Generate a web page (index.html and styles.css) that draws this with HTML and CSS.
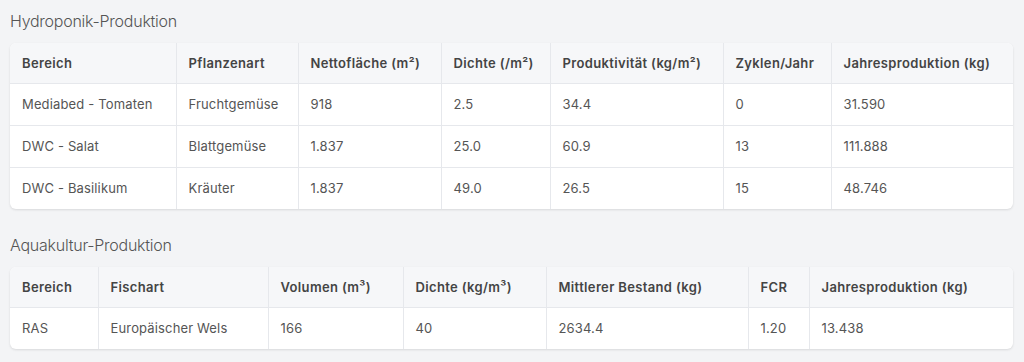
FILE: index.html
```html
<!DOCTYPE html>
<html lang="de">
<head>
<meta charset="utf-8">
<title>Produktion</title>
<link rel="stylesheet" href="styles.css">
</head>
<body>
<section class="block">
  <h2 class="title">Hydroponik-Produktion</h2>
  <div class="card">
    <table class="grid">
      <colgroup>
        <col class="h1"><col class="h2"><col class="h3"><col class="h4"><col class="h5"><col class="h6"><col class="h7">
      </colgroup>
      <thead>
        <tr><th>Bereich</th><th>Pflanzenart</th><th>Nettofläche (m²)</th><th>Dichte (/m²)</th><th>Produktivität (kg/m²)</th><th>Zyklen/Jahr</th><th>Jahresproduktion (kg)</th></tr>
      </thead>
      <tbody>
        <tr><td>Mediabed - Tomaten</td><td>Fruchtgemüse</td><td>918</td><td>2.5</td><td>34.4</td><td>0</td><td>31.590</td></tr>
        <tr><td>DWC - Salat</td><td>Blattgemüse</td><td>1.837</td><td>25.0</td><td>60.9</td><td>13</td><td>111.888</td></tr>
        <tr><td>DWC - Basilikum</td><td>Kräuter</td><td>1.837</td><td>49.0</td><td>26.5</td><td>15</td><td>48.746</td></tr>
      </tbody>
    </table>
  </div>
</section>
<section class="block">
  <h2 class="title">Aquakultur-Produktion</h2>
  <div class="card">
    <table class="grid">
      <colgroup>
        <col class="a1"><col class="a2"><col class="a3"><col class="a4"><col class="a5"><col class="a6"><col class="a7">
      </colgroup>
      <thead>
        <tr><th>Bereich</th><th>Fischart</th><th>Volumen (m³)</th><th>Dichte (kg/m³)</th><th>Mittlerer Bestand (kg)</th><th>FCR</th><th>Jahresproduktion (kg)</th></tr>
      </thead>
      <tbody>
        <tr><td>RAS</td><td>Europäischer Wels</td><td>166</td><td>40</td><td>2634.4</td><td>1.20</td><td>13.438</td></tr>
      </tbody>
    </table>
  </div>
</section>
</body>
</html>
```

FILE: styles.css
```css
* { box-sizing: border-box; }
html, body { margin: 0; }
body {
  background: #f3f4f6;
  padding: 9px 11px 0 10px;
  font-family: Inter, "Noto Sans", "Liberation Sans", sans-serif;
  color: #555;
}
.block { margin-bottom: 24px; }
.title {
  margin: 0 0 10px;
  font-size: 16px;
  line-height: 24px;
  font-weight: 300;
  letter-spacing: -0.25px;
  color: #555;
}
.card {
  background: #fff;
  border-radius: 6px;
  overflow: hidden;
  box-shadow: 0 1px 3px rgba(0,0,0,0.08), 0 1px 2px rgba(0,0,0,0.04);
}
.grid {
  width: 100%;
  border-collapse: collapse;
  table-layout: fixed;
  font-size: 13px;
}
.grid th, .grid td {
  text-align: left;
  padding: 12px 12px;
  line-height: 17px;
  border-left: 1px solid #e6e8ec;
  border-bottom: 1px solid #e6e8ec;
  white-space: nowrap;
}
.grid th:first-child, .grid td:first-child { border-left: none; }
.grid tbody tr:last-child td { border-bottom: none; }
.grid th {
  background: #f6f7f9;
  font-weight: 600;
  color: #444;
  letter-spacing: 0.35px;
  padding: 12px 12px 11px;
}
.grid td { color: #555; letter-spacing: 0.15px; }

.h1 { width: 166px; } .h2 { width: 122px; } .h3 { width: 143px; } .h4 { width: 109px; }
.h5 { width: 173px; } .h6 { width: 108px; } .h7 { width: 182px; }
.a1 { width: 88px; } .a2 { width: 170px; } .a3 { width: 135px; } .a4 { width: 143px; }
.a5 { width: 202px; } .a6 { width: 61px; } .a7 { width: 204px; }
```
